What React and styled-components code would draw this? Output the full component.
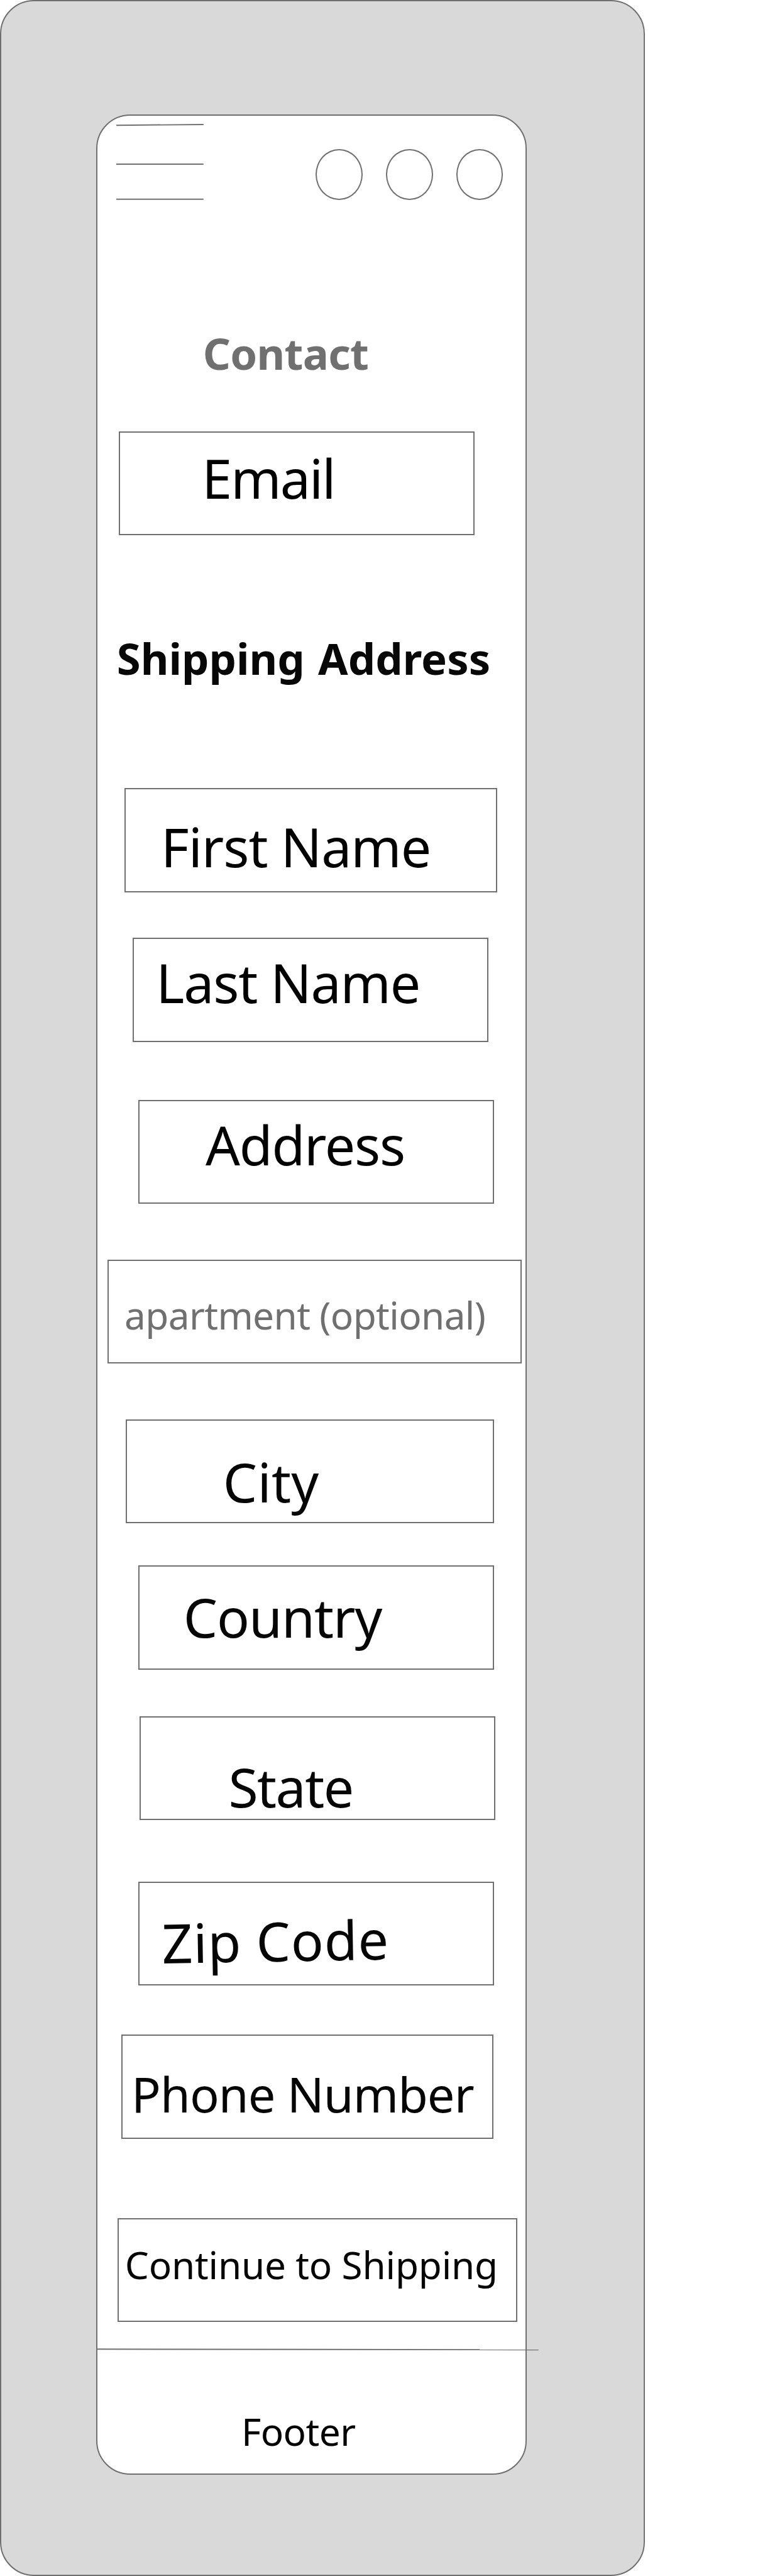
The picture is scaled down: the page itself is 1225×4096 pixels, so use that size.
import React, { Fragment } from 'react';
import styled, { createGlobalStyle } from 'styled-components';

const LINE = '#707070';

/* 1rem is ten units of the wireframe */
const GlobalStyle = createGlobalStyle`
	html {
		font-size: 9.0088px;
	}

	body {
		margin: 0;
		background: #fff;
		font-family: 'Noto Sans', 'Open Sans', sans-serif;
	}

	* {
		box-sizing: border-box;
	}
`;

const Device = styled.div`
	width: 113.9rem;
	height: 4096px;
	padding: calc(20.2rem - 2px) 0 0 calc(17rem - 2px);
	background: #d9d9d9;
	border: 2px solid ${LINE};
	border-radius: 6rem;
`;

const Screen = styled.main`
	display: flex;
	flex-direction: column;
	align-items: flex-start;
	width: 76rem;
	height: 416.6rem;
	background: #fff;
	border: 2px solid ${LINE};
	border-radius: 6rem;
`;

const Header = styled.header`
	display: flex;
	align-items: flex-end;
	height: 14.88rem;
	padding-left: 3.28rem;
`;

const Burger = styled.svg`
	display: block;
	width: 15.4rem;
	height: 13.4rem;
	overflow: visible;
	fill: none;
	stroke: ${LINE};
	stroke-width: 2.2;
`;

const Actions = styled.div`
	display: flex;
	gap: 4.1rem;
	margin-left: 19.85rem;
`;

const Circle = styled.span`
	width: 8.3rem;
	height: 9rem;
	border: 2px solid ${LINE};
	border-radius: 50%;
`;

const Section = styled.div`
	display: flex;
	flex: none;
	height: ${props => props.height}rem;
`;

const Field = styled.div`
	display: flex;
	align-items: flex-start;
	flex: none;
	width: ${props => props.width}rem;
	height: 18.4rem;
	margin-top: ${props => props.gap || 0}rem;
	margin-left: ${props => props.left}rem;
	border: 2px solid ${LINE};
`;

/* baseline is the distance from the top of the parent to the foot of the letters */
const Label = styled.span`
	height: 1em;
	margin-top: calc(${props => props.$baseline}rem - 0.888em);
	margin-left: ${props => props.$left}rem;
	color: ${props => props.$color || '#000'};
	font-size: ${props => props.$size || 9.55}rem;
	font-weight: ${props => (props.$bold ? 700 : 400)};
	letter-spacing: ${props => props.$spacing || 0}em;
	word-spacing: ${props => (props.$bold ? 0.05 : 0)}em;
	line-height: 1;
	white-space: nowrap;
	transform: rotate(${props => props.$tilt || 0}deg);
	transform-origin: 0 88.8%;
`;

const Rule = styled.svg`
	display: block;
	flex: none;
	width: 78rem;
	height: 0.4rem;
	margin-top: 4.6rem;
	margin-left: -0.12rem;
	overflow: visible;
	stroke: ${LINE};
	stroke-width: 2.2;
`;

const Footer = styled.footer`
	display: flex;
`;

const fields = [
	{ text: 'First Name', left: 4.78, width: 65.8, x: 6.2, baseline: 13.8, spacing: -0.012 },
	{ text: 'Last Name', gap: 8, left: 6.2, width: 62.8, x: 3.92, baseline: 11.4, spacing: -0.014 },
	{ text: 'Address', gap: 10.2, left: 7.18, width: 62.8, x: 11.67, baseline: 11.42, spacing: -0.014 },
	{
		text: 'apartment (optional)',
		gap: 9.8,
		left: 1.75,
		width: 73.2,
		x: 2.8,
		baseline: 12.2,
		size: 6.69,
		spacing: -0.01,
		color: LINE
	},
	{ text: 'City', gap: 9.8, left: 5, width: 65, x: 16.95, baseline: 14.5, spacing: 0.003, color: '#050505' },
	{ text: 'Country', gap: 7.4, left: 7.18, width: 62.8, x: 7.75, baseline: 12.6, spacing: -0.0125, color: '#050505' },
	{ text: 'State', gap: 8.2, left: 7.4, width: 62.8, x: 15.5, baseline: 16, spacing: -0.018, color: '#050505' },
	{
		text: 'Zip Code',
		gap: 10.8,
		left: 7.18,
		width: 62.8,
		x: 4.05,
		baseline: 14.25,
		spacing: 0.01,
		color: '#050505',
		tilt: -1
	},
	{
		text: 'Phone Number',
		gap: 8.6,
		left: 4.16,
		width: 65.8,
		x: 1.6,
		baseline: 13.6,
		size: 8.6,
		spacing: -0.012,
		color: '#050505'
	},
	{
		text: 'Continue to Shipping',
		gap: 14,
		left: 3.58,
		width: 70.6,
		x: 1.04,
		baseline: 10.6,
		size: 6.69,
		spacing: -0.003,
		color: '#050505'
	}
];

/**
 * Checkout wireframe, contact and shipping step
 */
const App = () => (
	<Fragment>
		<GlobalStyle />
		<Device>
			<Screen>
				<Header>
					<Burger viewBox="0 0 154 134">
						<path d="M0 2.6L154 1M0 71H154M0 133H154" />
					</Burger>
					<Actions>
						<Circle />
						<Circle />
						<Circle />
					</Actions>
				</Header>
				<Section height={40.8}>
					<Label $left={18.6} $baseline={30} $size={7.64} $spacing={-0.01} $color={LINE} $bold>
						Contact
					</Label>
				</Section>
				<Field left={3.78} width={62.8}>
					<Label $left={14.45} $baseline={11.8} $spacing={-0.0225}>
						Email
					</Label>
				</Field>
				<Section height={44.6}>
					<Label $left={3.4} $baseline={24.6} $size={7.64} $color="#070707" $bold>
						Shipping Address
					</Label>
				</Section>
				{fields.map(field => (
					<Field key={field.text} gap={field.gap} left={field.left} width={field.width}>
						<Label
							$left={field.x}
							$baseline={field.baseline}
							$size={field.size}
							$spacing={field.spacing}
							$color={field.color}
							$tilt={field.tilt}
						>
							{field.text}
						</Label>
					</Field>
				))}
				<Rule viewBox="0 0 780 4" preserveAspectRatio="none">
					<line x1="0" y1="1.5" x2="780" y2="2.5" />
				</Rule>
				<Footer>
					<Label $left={25.4} $baseline={16.9} $size={6.69} $spacing={-0.009}>
						Footer
					</Label>
				</Footer>
			</Screen>
		</Device>
	</Fragment>
);

export default App;
